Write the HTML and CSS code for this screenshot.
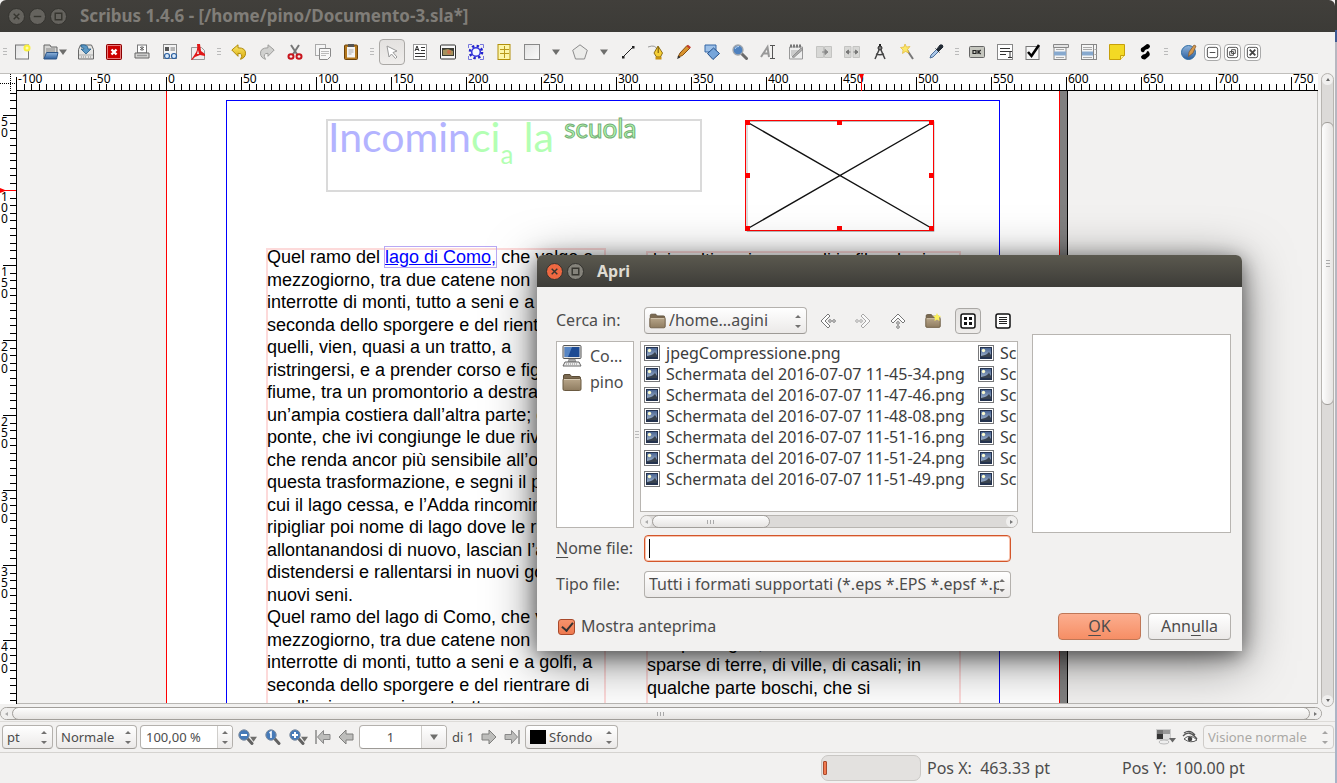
FILE: index.html
```html
<!DOCTYPE html>
<html lang="it">
<head>
<meta charset="utf-8">
<title>Scribus 1.4.6 - [/home/pino/Documento-3.sla*]</title>
<link rel="stylesheet" href="styles.css">
</head>
<body>
<svg class="defs" aria-hidden="true">
  <defs>
    <linearGradient id="g-blue" x1="0" y1="0" x2="0" y2="1"><stop offset="0" stop-color="#8fb4dc"/><stop offset="1" stop-color="#2c5f9e"/></linearGradient>
    <linearGradient id="g-photo" x1="0" y1="0" x2="0" y2="1"><stop offset="0" stop-color="#4a6593"/><stop offset="1" stop-color="#a3b7cf"/></linearGradient>
    <linearGradient id="g-gold" x1="0" y1="0" x2="0" y2="1"><stop offset="0" stop-color="#fbe96a"/><stop offset="1" stop-color="#d9a90c"/></linearGradient>
    <linearGradient id="g-paper" x1="0" y1="0" x2="1" y2="1"><stop offset="0" stop-color="#e2e2e2"/><stop offset="1" stop-color="#fafafa"/></linearGradient>
    <linearGradient id="g-folder" x1="0" y1="0" x2="0" y2="1"><stop offset="0" stop-color="#b9a78b"/><stop offset="1" stop-color="#8f7c60"/></linearGradient>
    <symbol id="photo" viewBox="0 0 16 16"><rect x=".5" y=".5" width="15" height="15" fill="#fff" stroke="#77787a"/><rect x="2" y="2" width="12" height="12" fill="#23324e"/><rect x="3" y="3" width="10" height="9" fill="url(#g-photo)"/><circle cx="5.500" cy="5.500" r="1.700" fill="#fbfbd0"/><path d="M3 12v-1l4-1 2-1 2-2 2 3v2z" fill="#39434f"/></symbol>
    <symbol id="folder" viewBox="0 0 20 18"><path d="M1.500 16V2.500q0-1.500 1.500-1.500h5l1.500 2H17q1.500 0 1.500 1.500V16" fill="#7b6a51" stroke="#5b4c36"/><rect x="1" y="5" width="18" height="12" rx="1.500" fill="url(#g-folder)" stroke="#6b5a41"/><path d="M2 6h16" stroke="#d6c9b2"/></symbol>
    <symbol id="computer" viewBox="0 0 20 22"><rect x="1" y=".5" width="18" height="13" rx="1" fill="#e6e6e4" stroke="#555"/><rect x="2.500" y="2" width="15" height="10" fill="#1d4b94"/><path d="M3 2h7L6 12H3z" fill="#5685c4"/><path d="M7 14h6l1 3H6z" fill="#aaa" stroke="#777" stroke-width=".6"/><path d="M3 17h14l2 4H1z" fill="#eee" stroke="#666"/><path d="M4 19h12" stroke="#888" stroke-dasharray="1 1"/></symbol>
    <symbol id="down" viewBox="0 0 8 6"><path d="M0 .5h8L4 6z" fill="#6e6e6c"/></symbol>
    <symbol id="updown" viewBox="0 0 6 14"><path d="M0 4h6L3 1zM0 11h6l-3 3z" fill="#727170"/></symbol>
    <symbol id="new" viewBox="0 0 16 16"><rect x=".5" y="1" width="13" height="14" fill="url(#g-paper)" stroke="#777"/><circle cx="12" cy="4" r="3.500" fill="#f8ef3b"/><circle cx="12" cy="4" r="1.500" fill="#fffcb0"/></symbol>
    <symbol id="open" viewBox="0 0 16 16"><path d="M1 15V1h6l1 2h6v5" fill="#d6d6d4" stroke="#666"/><path d="M3 5h9M3 7h9" stroke="#888"/><path d="M3.500 8.500H15L13.500 15H1z" fill="url(#g-blue)" stroke="#2c5587"/></symbol>
    <symbol id="save" viewBox="0 0 16 16"><path d="M.5 15V5.500l2-4.500h11l2 4.500V15z" fill="#e4e4e2" stroke="#686868"/><path d="M1 11h14" stroke="#aaa"/><path d="M10 13h3M3 13h5" stroke="#888" stroke-dasharray="1 1"/><path d="M3 1q7-1 7 4h3l-5 5-5-5h3q0-2-3-2z" fill="#5a97c4" stroke="#235d89" stroke-width=".8"/></symbol>
    <symbol id="close" viewBox="0 0 16 16"><rect x=".5" y=".5" width="15" height="15" rx="1" fill="#c00" stroke="#8b0000"/><rect x="1.500" y="1.500" width="13" height="13" fill="none" stroke="#e87878"/><path d="M5.500 5.500l5 5M10.500 5.500l-5 5" stroke="#fff" stroke-width="2.400"/></symbol>
    <symbol id="print" viewBox="0 0 16 16"><rect x="3.500" y="1" width="9" height="8" fill="#fff" stroke="#777"/><path d="M8 2v5M6 3l4 3M10 3L6 6" stroke="#666"/><path d="M1 9h14v5H1z" fill="#d8d8d6" stroke="#666"/><path d="M3 11.500h10" stroke="#999" stroke-width="1.500"/></symbol>
    <symbol id="preview" viewBox="0 0 16 16"><rect x="1.500" y=".5" width="13" height="14" fill="#f3f3f3" stroke="#888"/><rect x="3" y="3" width="4" height="4" fill="#555"/><path d="M8.500 4H13M8.500 6H13" stroke="#777"/><circle cx="5" cy="12" r="2.500" fill="#dcebfa" stroke="#2a5f9f" stroke-width="1.200"/><circle cx="12" cy="12" r="2.500" fill="#dcebfa" stroke="#2a5f9f" stroke-width="1.200"/></symbol>
    <symbol id="pdf" viewBox="0 0 16 16"><path d="M1.500 3.500h10l3 3v9h-13z" fill="#eee" stroke="#999"/><path d="M7 0h3l1 7 4 3v2l-5-1-5 2-3 3H1l4-6q3-4 2-10zM8 6l-1 4h2z" fill="#e01818" fill-rule="evenodd"/></symbol>
    <symbol id="undo" viewBox="0 0 16 16"><path d="M.8 6L7 .8v3q8 0 7.500 6-.3 4-5 5.500 3.500-6-2.500-6v3z" fill="url(#g-gold)" stroke="#b08a08"/></symbol>
    <symbol id="redo" viewBox="0 0 16 16"><path d="M15.200 6L9 .8v3q-8 0-7.500 6 .3 4 5 5.500Q3 9.300 9 9.300v3z" fill="#d0d0ce" stroke="#9d9d9b"/></symbol>
    <symbol id="cut" viewBox="0 0 16 16"><path d="M4 1l6.500 10M12 1L5.500 11" stroke="#777" stroke-width="2"/><ellipse cx="4" cy="12.500" rx="2.500" ry="2.300" fill="none" stroke="#c8141c" stroke-width="2"/><ellipse cx="12" cy="12.500" rx="2.500" ry="2.300" fill="none" stroke="#c8141c" stroke-width="2"/></symbol>
    <symbol id="copy" viewBox="0 0 16 16"><rect x=".5" y=".5" width="10" height="11" fill="#f5f5f5" stroke="#aaa"/><path d="M4.500 4.500h11v8l-3 3h-8z" fill="#f8f8f8" stroke="#8a8a8a"/><path d="M6 7.500h8M6 9.500h8M6 11.500h5" stroke="#bbb"/></symbol>
    <symbol id="paste" viewBox="0 0 16 16"><rect x="1.500" y="1" width="13" height="14.500" rx="1" fill="#b4781e" stroke="#6c430a"/><rect x="4" y="3" width="8" height="10.500" fill="#f4f4f4"/><rect x="5" y="0" width="6" height="3" fill="#555"/><path d="M5.500 6h5M5.500 8h5M5.500 10h3" stroke="#aaa"/></symbol>
    <symbol id="pointer" viewBox="0 0 16 16"><path d="M3 2l10 5-4 1.500 4 4.500-1.500 1.500-4-4.500L5 13z" fill="#fff" stroke="#999"/></symbol>
    <symbol id="textframe" viewBox="0 0 16 16"><rect x="1.500" y=".5" width="13" height="15" fill="#fff" stroke="#999"/><path d="M3 7l2-5 2 5M3.500 5.500h3M9 3.500h4M9 6.500h4M3 9.500h10M3 12.500h10" stroke="#333" fill="none"/></symbol>
    <symbol id="imageframe" viewBox="0 0 16 16"><rect x=".5" y="1" width="15" height="14" rx="1" fill="#f8f8f8" stroke="#333"/><rect x="2" y="4" width="12" height="8" fill="#3c3c34"/><path d="M3 11V6l5-1 5 2v4z" fill="#a5915c"/><circle cx="9" cy="8" r="2" fill="#cd6f4c"/></symbol>
    <symbol id="gear" viewBox="0 0 16 16"><path d="M.5 4V.5H4M12 .5h3.500V4M15.500 12v3.500H12M4 15.500H.5V12" fill="none" stroke="#77d"/><circle cx="8" cy="8" r="6" fill="none" stroke="#22c" stroke-width="2.600" stroke-dasharray="2.350 2.350"/><circle cx="8" cy="8" r="4.300" fill="#f4f6ff" stroke="#33d" stroke-width="1.500"/></symbol>
    <symbol id="table" viewBox="0 0 16 16"><rect x="2" y=".5" width="12" height="15" fill="#fdf6a8" stroke="#b1900b"/><path d="M8.500 2v12M4 5.500h9M4 9.500h9" stroke="#b99a1c"/></symbol>
    <symbol id="shape" viewBox="0 0 16 16"><rect x=".5" y=".5" width="15" height="15" fill="url(#g-paper)" stroke="#888"/></symbol>
    <symbol id="polygon" viewBox="0 0 16 16"><path d="M8 .8l7.300 5.500L12.500 15h-9L.7 6.300z" fill="#ececea" stroke="#8b8b8b"/></symbol>
    <symbol id="line" viewBox="0 0 16 16"><path d="M3 13L13 3" stroke="#222"/><path d="M2 12h2.500v2.500H2zM12 2h2.500v2.500H12z" fill="#222"/></symbol>
    <symbol id="bezier" viewBox="0 0 16 16"><path d="M0 3q8-3 9 3" fill="none" stroke="#999"/><path d="M10 2l4.500 7-2 4h-4L6 9z" fill="#f6cf35" stroke="#80600a" stroke-width=".9"/><path d="M10.200 3v6" stroke="#6b4d06"/><rect x="7.500" y="13" width="6" height="2.500" fill="#c7920f"/></symbol>
    <symbol id="pencil" viewBox="0 0 16 16"><path d="M2 13l2-4 7-7.500 3 2.500-7.500 7.500z" fill="#d8922c" stroke="#855012"/><path d="M12 .8l3 2.500-1.500 1.500-3-2.500z" fill="#c33d2f"/><path d="M1 15l1.300-3.500 2.200 2z" fill="#333"/></symbol>
    <symbol id="rotate" viewBox="0 0 16 16"><path d="M1 1h11v7H1z" fill="#9cc0e8" stroke="#3567a5"/><path d="M9.500 4l6 5.500L9 15.500 3.500 9.500z" fill="#76a5da" stroke="#234f89"/></symbol>
    <symbol id="zoom" viewBox="0 0 16 16"><path d="M9.500 9.500l5 5" stroke="#6b6b6b" stroke-width="3" stroke-linecap="round"/><circle cx="6" cy="6" r="5" fill="#4f82bf" stroke="#a0a6ad" stroke-width="1.300"/><path d="M3 5q1-3 4-2.500" stroke="#bcd5ef" fill="none"/></symbol>
    <symbol id="edittext" viewBox="0 0 16 16"><path d="M1 13L7.500 3 9 13M3.500 9.500H8" fill="none" stroke="#999" stroke-width="2"/><path d="M10 1.500h5M10 14.500h5M12.500 1.500v13" stroke="#555"/></symbol>
    <symbol id="story" viewBox="0 0 16 16"><path d="M1.500 3h13v12h-13z" fill="#eee" stroke="#999"/><path d="M2 2h12" stroke="#777" stroke-width="3" stroke-dasharray="2 1"/><path d="M3 7h8M3 9h6M3 11h4" stroke="#aaa"/><path d="M4 13l9-9 2 1.500-9 8z" fill="#aaa" stroke="#777" stroke-width=".6"/></symbol>
    <symbol id="link" viewBox="0 0 16 16"><path d="M.5 2.500h7v11h-7zM8.500 2.500h7v11h-7z" fill="#d8d8d6" stroke="#c4c4c2"/><path d="M6 8h4M9 5.500l3 2.500-3 2.500z" stroke="#888" fill="#888"/></symbol>
    <symbol id="unlink" viewBox="0 0 16 16"><path d="M.5 2.500h6.500v11H.5zM9 2.500h6.500v11H9z" fill="#d8d8d6" stroke="#c4c4c2"/><path d="M4.500 6L2 8l2.500 2zM11.500 6L14 8l-2.500 2zM3 8h3.500M9.500 8H13" stroke="#777" fill="#777"/></symbol>
    <symbol id="measure" viewBox="0 0 16 16"><path d="M8 0v2" stroke="#222" stroke-width="2"/><circle cx="8" cy="4" r="2" fill="#777" stroke="#222"/><path d="M7 6L3 15M9 6l4 9M4 10q4 1.500 8 0" stroke="#444" stroke-width="1.500" fill="none"/></symbol>
    <symbol id="wand" viewBox="0 0 16 16"><path d="M7 6l6 9" stroke="#777" stroke-width="2"/><path d="M5 0l1.500 3L10 2.500 7.500 5.500 9 9 5.500 7.500 2.500 9.500 3 6 .5 3.500 4 3z" fill="#fbe76a" stroke="#dfae20" stroke-width=".6"/></symbol>
    <symbol id="dropper" viewBox="0 0 16 16"><path d="M2 14l1-3 6-6 2 2-6 6z" fill="#a9c6e8" stroke="#4c6f99"/><path d="M7.500 4.500l4 4M9 5l3-4q3-1 3 2l-4 4z" fill="#222b35" stroke="#222b35"/></symbol>
    <symbol id="ok" viewBox="0 0 16 16"><rect x=".5" y="2.500" width="15" height="11" rx="1" fill="#c5c6be" stroke="#666"/><path d="M4 6.500h3v3H4zM9 6v4M11.700 6L9.500 8l2.200 2" fill="none" stroke="#222" stroke-width="1.200"/></symbol>
    <symbol id="field" viewBox="0 0 16 16"><rect x=".5" y=".5" width="15" height="15" fill="#fff" stroke="#888"/><path d="M3 4.500h10M3 7.500h10M3 10.500h6M11 7.500h4M11 13.500h4M13 7.500v6" stroke="#333"/></symbol>
    <symbol id="check" viewBox="0 0 16 16"><rect x="1" y="2.500" width="13" height="13" fill="#f6f6f6" stroke="#777"/><path d="M3 8l3.500 4L14 1" fill="none" stroke="#000" stroke-width="2.600"/></symbol>
    <symbol id="combo" viewBox="0 0 16 16"><rect x="1" y="1.500" width="12" height="14" fill="#f5f5f5" stroke="#888"/><path d="M.5.500h15v3H.5z" fill="#e4e4e4" stroke="#888"/><path d="M3 5.500h8M3 13.500h8" stroke="#aaa"/><path d="M1 7.500h12v4H1z" fill="#87a9ce"/></symbol>
    <symbol id="listbox" viewBox="0 0 16 16"><rect x=".5" y=".5" width="15" height="15" fill="#f5f5f5" stroke="#888"/><path d="M12.500 1v14" stroke="#888"/><path d="M2 3.500h9M2 5.500h9M2 13.500h9M13.500 5.500h2M13.500 10.500h2" stroke="#aaa"/><path d="M1 7.500h11v4H1z" fill="#87a9ce"/></symbol>
    <symbol id="note" viewBox="0 0 16 16"><path d="M.5.500h15v11l-4 4H.5z" fill="#f3d924" stroke="#c7a00a"/><path d="M11.500 15.500v-4h4" fill="#fbf08c" stroke="#c7a00a"/></symbol>
    <symbol id="linkann" viewBox="0 0 16 16"><path d="M4 7q-1-3 2-4l4-3q3 0 3 3l-2 2q-3 0-4 3-2 1-3-1zM12 8q2 3-1 5l-3 2.500q-4 0-4-3l2-2q3 0 4-3 1-1 2 .5z" fill="#000"/></symbol>
    <symbol id="globe" viewBox="0 0 16 16"><circle cx="7.500" cy="8.500" r="7" fill="url(#g-blue)" stroke="#2d6ca4"/><path d="M7.500 12.500L8 8l5-7 2 1-3 7z" fill="#d49a4f" stroke="#80552a" stroke-width=".7"/></symbol>
    <symbol id="zoombtn" viewBox="0 0 16 16"><path d="M9.500 9.500l4.500 5" stroke="#626262" stroke-width="3" stroke-linecap="round"/><circle cx="6" cy="6" r="5.200" fill="#467ab8" stroke="#7e8da0"/></symbol>
    <symbol id="arrow-left" viewBox="0 0 16 16"><path d="M1 8l7-7v4h7v6H8v4z" fill="#bdbdbb" stroke="#7f7f7d"/></symbol>
    <symbol id="arrow-first" viewBox="0 0 16 16"><path d="M1 1v14" stroke="#888" stroke-width="1.500"/><path d="M2.500 8l6-6.500v4H15v5H8.500v4z" fill="#bdbdbb" stroke="#888"/></symbol>
    <symbol id="chevron" viewBox="0 0 16 16"><path d="M1 8l7-7 2 2-5 5 5 5-2 2z" fill="#fff" stroke="#777"/><circle cx="10" cy="8" r="1.300" fill="#fff" stroke="#777"/><circle cx="14" cy="8" r="1.300" fill="#fff" stroke="#777"/></symbol>
  </defs>
</svg>

<div class="desktop">
<main class="window">
  <header class="titlebar">
    <button class="wm" aria-label="Chiudi"><svg viewBox="0 0 16 16"><path d="M5 5l6 6M11 5l-6 6"/></svg></button>
    <button class="wm" aria-label="Minimizza"><svg viewBox="0 0 16 16"><path d="M4 8h8"/></svg></button>
    <button class="wm" aria-label="Massimizza"><svg viewBox="0 0 16 16"><path d="M4.500 4.500h7v7h-7z"/></svg></button>
    <h1>Scribus 1.4.6 - [/home/pino/Documento-3.sla*]</h1>
  </header>

  <nav class="toolbar" aria-label="Strumenti">
    <i class="grip"></i>
    <button class="tool" aria-label="Nuovo"><svg><use href="#new"/></svg></button>
    <button class="tool wide" aria-label="Apri"><svg><use href="#open"/></svg><svg class="caret"><use href="#down"/></svg></button>
    <button class="tool" aria-label="Salva"><svg><use href="#save"/></svg></button>
    <button class="tool" aria-label="Chiudi documento"><svg><use href="#close"/></svg></button>
    <button class="tool" aria-label="Stampa"><svg><use href="#print"/></svg></button>
    <button class="tool" aria-label="Verifica"><svg><use href="#preview"/></svg></button>
    <button class="tool" aria-label="Esporta PDF"><svg><use href="#pdf"/></svg></button>
    <i class="grip"></i>
    <button class="tool" aria-label="Annulla"><svg><use href="#undo"/></svg></button>
    <button class="tool" aria-label="Ripeti"><svg><use href="#redo"/></svg></button>
    <button class="tool" aria-label="Taglia"><svg><use href="#cut"/></svg></button>
    <button class="tool" aria-label="Copia"><svg><use href="#copy"/></svg></button>
    <button class="tool" aria-label="Incolla"><svg><use href="#paste"/></svg></button>
    <i class="grip"></i>
    <button class="tool pressed" aria-label="Seleziona"><svg><use href="#pointer"/></svg></button>
    <button class="tool" aria-label="Cornice testo"><svg><use href="#textframe"/></svg></button>
    <button class="tool" aria-label="Cornice immagine"><svg><use href="#imageframe"/></svg></button>
    <button class="tool" aria-label="Cornice di resa"><svg><use href="#gear"/></svg></button>
    <button class="tool" aria-label="Tabella"><svg><use href="#table"/></svg></button>
    <button class="tool" aria-label="Forma"><svg><use href="#shape"/></svg></button>
    <button class="drop" aria-label="Altre forme"><svg class="caret"><use href="#down"/></svg></button>
    <button class="tool" aria-label="Poligono"><svg><use href="#polygon"/></svg></button>
    <button class="drop" aria-label="Opzioni poligono"><svg class="caret"><use href="#down"/></svg></button>
    <button class="tool" aria-label="Linea"><svg><use href="#line"/></svg></button>
    <button class="tool" aria-label="Bézier"><svg><use href="#bezier"/></svg></button>
    <button class="tool" aria-label="Mano libera"><svg><use href="#pencil"/></svg></button>
    <button class="tool" aria-label="Ruota"><svg><use href="#rotate"/></svg></button>
    <button class="tool" aria-label="Ingrandimento"><svg><use href="#zoom"/></svg></button>
    <button class="tool" aria-label="Modifica testo"><svg><use href="#edittext"/></svg></button>
    <button class="tool" aria-label="Story Editor"><svg><use href="#story"/></svg></button>
    <button class="tool" aria-label="Collega cornici"><svg><use href="#link"/></svg></button>
    <button class="tool" aria-label="Scollega cornici"><svg><use href="#unlink"/></svg></button>
    <button class="tool" aria-label="Misure"><svg><use href="#measure"/></svg></button>
    <button class="tool" aria-label="Copia proprietà"><svg><use href="#wand"/></svg></button>
    <button class="tool" aria-label="Contagocce"><svg><use href="#dropper"/></svg></button>
    <i class="grip"></i>
    <button class="tool" aria-label="Pulsante PDF"><svg><use href="#ok"/></svg></button>
    <button class="tool" aria-label="Campo testo PDF"><svg><use href="#field"/></svg></button>
    <button class="tool" aria-label="Casella PDF"><svg><use href="#check"/></svg></button>
    <button class="tool" aria-label="Combo PDF"><svg><use href="#combo"/></svg></button>
    <button class="tool" aria-label="Elenco PDF"><svg><use href="#listbox"/></svg></button>
    <button class="tool" aria-label="Annotazione"><svg><use href="#note"/></svg></button>
    <button class="tool" aria-label="Collegamento"><svg><use href="#linkann"/></svg></button>
    <i class="grip last"></i>
    <button class="tool" aria-label="Scribus"><svg><use href="#globe"/></svg></button>
    <div class="mdi">
      <button aria-label="Riduci"><svg viewBox="0 0 16 16"><rect x="2.500" y="2.500" width="11" height="11" rx="2"/><path d="M5 8h6"/></svg></button>
      <button aria-label="Ripristina"><svg viewBox="0 0 16 16"><rect x="2.500" y="2.500" width="11" height="11" rx="2"/><path d="M7 5h4v4H7zM5 7h4v4H5z"/></svg></button>
      <button aria-label="Chiudi"><svg viewBox="0 0 16 16"><rect x="2.500" y="2.500" width="11" height="11" rx="2"/><path d="M5 5l6 6M11 5l-6 6" stroke-width="2"/></svg></button>
    </div>
  </nav>

  <section class="workspace">
    <div class="view">
      <div class="ruler-row">
        <div class="corner"></div>
        <div class="ruler-h">
          <span>-100</span><span>-50</span><span>0</span><span>50</span><span>100</span><span>150</span><span>200</span><span>250</span><span>300</span><span>350</span><span>400</span><span>450</span><span>500</span><span>550</span><span>600</span><span>650</span><span>700</span><span>750</span>
          <svg class="mark-h" viewBox="0 0 5 17"><path d="M0 0h5L3 5v12H2V5z"/></svg>
        </div>
      </div>
      <div class="canvas-row">
        <div class="ruler-v">
          <span>50</span><span>100</span><span>150</span><span>200</span><span>250</span><span>300</span><span>350</span><span>400</span>
          <svg class="mark-v" viewBox="0 0 17 5"><path d="M0 0l5 2h12v1H5L0 5z"/></svg>
        </div>
        <div class="canvas">
          <div class="page"></div>
          <div class="margins"></div>
          <div class="title-frame"><span class="violet">Incomin</span><span class="green">ci<sub>a</sub> la <sup>scuola</sup></span></div>
          <svg class="picture" viewBox="0 0 190 112">
            <path d="M2 1.500h187v110H2z" fill="none" stroke="#bbb"/>
            <path d="M2 2l186 107M188 2L2 109" stroke="#111" stroke-width="1.400"/>
            <path d="M.5.500h188v110H.5z" fill="none" stroke="#f00"/>
            <path d="M0 0h5v5H0zM92 0h5v5h-5zM184 0h5v5h-5zM0 53h5v5H0zM184 53h5v5h-5zM0 106h5v5H0zM92 106h5v5h-5zM184 106h5v5h-5z" fill="#f00"/>
          </svg>
          <div class="text-frame first"><p>Quel ramo del <a href="#lago">lago di Como,</a> che volge a<br>mezzogiorno, tra due catene non<br>interrotte di monti, tutto a seni e a golfi, a<br>seconda dello sporgere e del rientrare di<br>quelli, vien, quasi a un tratto, a<br>ristringersi, e a prender corso e figura di<br>fiume, tra un promontorio a destra, e<br>un’ampia costiera dall’altra parte; e il<br>ponte, che ivi congiunge le due rive, par<br>che renda ancor più sensibile all’occhio<br>questa trasformazione, e segni il punto in<br>cui il lago cessa, e l’Adda rincomincia, per<br>ripigliar poi nome di lago dove le rive,<br>allontanandosi di nuovo, lascian l’acqua<br>distendersi e rallentarsi in nuovi golfi e in<br>nuovi seni.<br>Quel ramo del lago di Como, che volge a<br>mezzogiorno, tra due catene non<br>interrotte di monti, tutto a seni e a golfi, a<br>seconda dello sporgere e del rientrare di<br>quelli, vien, quasi a un tratto, a</p></div>
          <div class="text-frame second"><p>dai molti suoi cocuzzoli in fila, che in<br>vero lo fanno somigliare a una sega:<br>talché non è chi, al primo vederlo,<br>purché sia di fronte, come per<br>di su le mura di Milano che<br>settentrione, non lo discerna tosto,<br>un tal contrassegno, in quella lunga<br>vasta giogaia, dagli altri monti di<br>nome più oscuro e di forma più<br>comune. Per un buon pezzo, la<br>sale con un pendìo lento e continuo;<br>poi si rompe in poggi e in valloncelli,<br>in erte e in ispianate, secondo<br>l’ossatura de’ due monti, e il lavoro<br>dell’acque. Il lembo estremo,<br>dalle foci de’ torrenti, è quasi tutto<br>ghiaia e ciottoloni; il resto,<br>campi e vigne,<br>sparse di terre, di ville, di casali; in<br>qualche parte boschi, che si<br>prolungano su per la montagna.</p></div>
        </div>
      </div>
    </div>
    <div class="vscroll"><i class="cap up"></i><i class="slack-top"></i><i class="thumb"></i><i class="slack"></i><i class="cap down"></i></div>
  </section>
  <div class="hscroll"><i class="cap left"></i><i class="thumb"></i><i class="cap right"></i></div>

  <div class="bottombar">
    <div class="combo unit"><select aria-label="Unità"><option>pt</option></select><svg class="ud"><use href="#updown"/></svg></div>
    <div class="combo quality"><select aria-label="Qualità"><option>Normale</option></select><svg class="ud"><use href="#updown"/></svg></div>
    <div class="combo entry spin"><input aria-label="Zoom" value="100,00 %"><span class="side"><svg class="ud"><use href="#updown"/></svg></span></div>
    <button class="mini lens" aria-label="Riduci zoom"><svg><use href="#zoombtn"/><path d="M3 6h6" stroke="#fff" stroke-width="2"/></svg><svg class="caret"><use href="#down"/></svg></button>
    <button class="mini lens one" aria-label="Zoom 1:1"><svg><use href="#zoombtn"/><path d="M4.500 4L6 3v6" fill="none" stroke="#fff" stroke-width="1.600"/></svg></button>
    <button class="mini lens" aria-label="Aumenta zoom"><svg><use href="#zoombtn"/><path d="M3 6h6M6 3v6" stroke="#fff" stroke-width="2"/></svg><svg class="caret"><use href="#down"/></svg></button>
    <button class="mini" aria-label="Prima pagina"><svg><use href="#arrow-first"/></svg></button>
    <button class="mini" aria-label="Pagina precedente"><svg><use href="#arrow-left"/></svg></button>
    <div class="combo entry pageno"><input aria-label="Pagina" value="1"><span class="side"><svg class="caret"><use href="#down"/></svg></span></div>
    <span class="of">di 1</span>
    <button class="mini flip" aria-label="Pagina successiva"><svg><use href="#arrow-left"/></svg></button>
    <button class="mini flip" aria-label="Ultima pagina"><svg><use href="#arrow-first"/></svg></button>
    <div class="combo layer"><i class="swatch"></i><select aria-label="Livello"><option>Sfondo</option></select><svg class="ud"><use href="#updown"/></svg></div>
    <span class="spacer"></span>
    <button class="mini monitor" aria-label="Gestione colore"><svg viewBox="0 0 20 16"><path d="M0 0h15v11H0z" fill="#ccc"/><path d="M1 1h6v4H1z" fill="#777"/><path d="M7 1h7v4H7z" fill="#999"/><path d="M1 5h6v5H1z" fill="#333"/><path d="M7 5h7v5H7z" fill="#ddd"/><ellipse cx="8" cy="13" rx="5" ry="2" fill="#eee" stroke="#bbb"/><path d="M13 9h7l-3.500 4.500z" fill="#666"/></svg></button>
    <button class="mini" aria-label="Anteprima"><svg viewBox="0 0 16 16"><path d="M2 10q6-6 13 1-6 4-13-1z" fill="#fff" stroke="#555"/><circle cx="8" cy="10" r="2.300" fill="#444"/><path d="M1 7q6-7 14 3M2 4q6-4 11 2" fill="none" stroke="#555" stroke-width="1.300"/></svg></button>
    <div class="combo vision off"><select aria-label="Visione" disabled><option>Visione normale</option></select><svg class="ud"><use href="#updown"/></svg></div>
  </div>

  <footer class="status">
    <div class="progress" role="progressbar" aria-label="Avanzamento"><i></i></div>
    <span class="posx">Pos X:&nbsp; 463.33 pt</span>
    <span class="posy">Pos Y:&nbsp; 100.00 pt</span>
  </footer>
</main>
</div>

<form class="dialog" role="dialog" aria-label="Apri">
  <header class="titlebar active">
    <button type="button" class="wm red" aria-label="Chiudi"><svg viewBox="0 0 16 16"><path d="M5 5l6 6M11 5l-6 6"/></svg></button>
    <button type="button" class="wm" aria-label="Massimizza"><svg viewBox="0 0 16 16"><path d="M4.500 4.500h7v7h-7z"/></svg></button>
    <h2>Apri</h2>
  </header>
  <div class="body">
    <div class="chooser">
      <div class="line">
        <label for="where">Cerca in:</label>
        <div class="combo place"><svg class="f"><use href="#folder"/></svg><select id="where"><option>/home…agini</option></select><svg class="ud"><use href="#updown"/></svg></div>
        <div class="nav">
          <button type="button" class="tool" aria-label="Indietro"><svg><use href="#chevron"/></svg></button>
          <button type="button" class="tool flip dim" aria-label="Avanti"><svg><use href="#chevron"/></svg></button>
          <button type="button" class="tool up" aria-label="Su"><svg><use href="#chevron"/></svg></button>
          <button type="button" class="tool" aria-label="Nuova cartella"><svg viewBox="0 0 16 16"><use href="#folder" width="16" height="16"/><path d="M12 0l1.200 2.500 2.800.5-2 2 .5 3-2.500-1.500L9.500 8l.5-3-2-2 2.800-.5z" fill="#faf05a"/></svg></button>
          <button type="button" class="tool pressed" aria-label="Elenco"><svg viewBox="0 0 16 16"><rect x="1" y="1" width="14" height="14" rx="2" fill="#fff" stroke="#111" stroke-width="1.500"/><path d="M4 4h3v3H4zM9 4h3v3H9zM4 9h3v3H4zM9 9h3v3H9z" fill="#111"/></svg></button>
          <button type="button" class="tool" aria-label="Dettagli"><svg viewBox="0 0 16 16"><rect x="1" y="1" width="14" height="14" rx="2" fill="#fff" stroke="#111" stroke-width="1.500"/><path d="M4 4.500h8M4 6.500h8M4 8.500h8M4 10.500h8" stroke="#222"/></svg></button>
        </div>
      </div>
      <div class="panes">
        <ul class="places">
          <li><svg class="pc"><use href="#computer"/></svg>Co…</li>
          <li><svg><use href="#folder"/></svg>pino</li>
        </ul>
        <i class="grip"></i>
        <div class="files-col">
          <div class="files">
            <ul>
              <li><svg><use href="#photo"/></svg>jpegCompressione.png</li>
              <li><svg><use href="#photo"/></svg>Schermata del 2016-07-07 11-45-34.png</li>
              <li><svg><use href="#photo"/></svg>Schermata del 2016-07-07 11-47-46.png</li>
              <li><svg><use href="#photo"/></svg>Schermata del 2016-07-07 11-48-08.png</li>
              <li><svg><use href="#photo"/></svg>Schermata del 2016-07-07 11-51-16.png</li>
              <li><svg><use href="#photo"/></svg>Schermata del 2016-07-07 11-51-24.png</li>
              <li><svg><use href="#photo"/></svg>Schermata del 2016-07-07 11-51-49.png</li>
            </ul>
            <ul>
              <li><svg><use href="#photo"/></svg>Sc</li>
              <li><svg><use href="#photo"/></svg>Sc</li>
              <li><svg><use href="#photo"/></svg>Sc</li>
              <li><svg><use href="#photo"/></svg>Sc</li>
              <li><svg><use href="#photo"/></svg>Sc</li>
              <li><svg><use href="#photo"/></svg>Sc</li>
              <li><svg><use href="#photo"/></svg>Sc</li>
            </ul>
          </div>
          <div class="hscroll small"><i class="cap left"></i><i class="thumb"></i><i class="slack"></i><i class="cap right"></i></div>
        </div>
      </div>
      <div class="line entry-line">
        <label for="name"><u>N</u>ome file:</label>
        <div class="filename"><i class="cursor"></i><input id="name" type="text"></div>
      </div>
      <div class="line">
        <label for="type">Tipo file:</label>
        <div class="combo type"><select id="type"><option>Tutti i formati supportati (*.eps *.EPS *.epsf *.ps)</option></select><svg class="ud"><use href="#updown"/></svg></div>
      </div>
    </div>
    <div class="preview" aria-label="Anteprima"></div>
  </div>
  <div class="actions">
    <label class="tick"><input type="checkbox" checked> Mostra anteprima</label>
    <button type="submit" class="btn primary"><span><u>O</u>K</span></button>
    <button type="button" class="btn"><span>Ann<u>u</u>lla</span></button>
  </div>
</form>
</body>
</html>
```
FILE: styles.css
```css
* { box-sizing: border-box; }
html, body { height: 100%; }
body {
  margin: 0;
  overflow: hidden;
  position: relative;
  font-family: "Noto Sans", "Open Sans", sans-serif;
  font-size: 16px;
  line-height: 21px;
  color: #4c4c4c;
}
button, input, select { font: inherit; color: inherit; margin: 0; }
button { border: 0; padding: 0; background: none; }
ul { list-style: none; margin: 0; padding: 0; }
h1, h2, p { margin: 0; }
.defs { position: absolute; width: 0; height: 0; }

.desktop { height: 100%; padding-right: 2px; background: linear-gradient(#3c3b37 0 30px, #3e5a92 30px 42px, #b7b7c0 42px 500px, #a9b4c8); }
.window { height: 100%; display: flex; flex-direction: column; background: #f2f1f0; }

/* Title bars */
.titlebar { display: flex; align-items: center; gap: 4px; flex: none; height: 32px; padding-left: 8px; background: linear-gradient(#413f3b, #3c3b37); color: #807d78; border-radius: 6px 6px 0 0; }
.titlebar h1, .titlebar h2 { margin-left: 9px; font-size: 17px; font-weight: 700; line-height: 20px; }
.titlebar h2 { font-size: 16px; }
.wm { width: 17px; height: 17px; border-radius: 50%; background: #65635e; border: 1px solid #34332f; }
.wm svg { display: block; width: 15px; height: 15px; fill: none; stroke: #36352f; stroke-width: 1.500; }
.titlebar.active { padding-left: 9px; background: linear-gradient(#5b594f, #3d3c38); color: #dfdbd2; }
.active .wm { background: #85837b; }
.active .wm.red { background: #ee6841; }

/* Main toolbar */
.toolbar { display: flex; align-items: center; gap: 2px; flex: none; height: 41px; padding-bottom: 1px; }
.grip { flex: none; width: 11px; height: 8px; background: repeating-linear-gradient(#bbb 0 1px, transparent 1px 3px) content-box; padding: 0 3px 0 4px; }
.toolbar .grip:first-child { width: 8px; padding: 0 1px 0 3px; }
.grip.last { margin-right: 3px; }
.tool { display: flex; flex: none; align-items: center; justify-content: center; width: 26px; height: 26px; border-radius: 4px; }
.tool svg { width: 16px; height: 16px; }
.tool.wide { width: 33px; }
.tool .caret, .caret { width: 8px; height: 6px; }
.tool.pressed { border: 1px solid #aaa8a5; background: linear-gradient(#e3e1df, #efedeb); }
.drop { display: flex; justify-content: center; flex: none; width: 18px; }
.mdi { display: flex; gap: 3px; }
.mdi button { display: flex; width: 17px; height: 17px; border: 1px solid #aaa; border-radius: 4px; background: #fff; }
.mdi svg { width: 15px; height: 15px; fill: none; stroke: #444; }

/* Rulers and canvas */
.workspace { flex: 1; min-height: 0; display: flex; gap: 3px; padding-right: 1px; }
.view { flex: 1; min-width: 0; display: flex; flex-direction: column; }
.ruler-row { display: flex; height: 18px; border-top: 1px solid #c0bfbc; background: #fff; }
.corner { width: 16px; background: repeating-linear-gradient(90deg, #000 0 1px, transparent 1px 2px) 0 9px / 16px 1px no-repeat, repeating-linear-gradient(#000 0 1px, transparent 1px 2px) 10px 0 / 1px 17px no-repeat; }
.ruler-h {
  position: relative; flex: 1; min-width: 0; display: flex; overflow-x: clip; overflow-y: visible;
  border-bottom: 1px solid #000;
  font-size: 12px; line-height: 12px; color: #000;
  background:
    repeating-linear-gradient(90deg, #000 0 1px, transparent 1px 75px) 0 3px / 100% 13px no-repeat,
    repeating-linear-gradient(90deg, #000 0 1px, transparent 1px 8px, #000 8px 9px, transparent 9px 15px) 0 10px / 100% 6px no-repeat;
}
.ruler-h span { flex: 0 0 75px; padding-left: 2px; margin-top: -1px; }
.mark-h { position: absolute; left: 843px; top: 0; width: 5px; height: 17px; fill: #f00; }
.canvas-row { flex: 1; min-height: 0; display: flex; }
.ruler-v {
  position: relative; flex: none; width: 17px; padding-top: 24px; margin-bottom: 3px; overflow: hidden;
  border-right: 1px solid #000;
  font-size: 12px; line-height: 11px; color: #000;
  background:
    linear-gradient(#000 1px, transparent 1px) 3px 24px / 13px 75px repeat-y,
    linear-gradient(#000 1px, transparent 1px 8px, #000 8px 9px, transparent 9px) 10px 9px / 6px 15px repeat-y,
    #fff;
}
.ruler-v span { display: block; width: 8px; height: 75px; padding: 1px 0 0 1px; word-break: break-all; }
.mark-v { position: absolute; left: 0; top: 97px; width: 17px; height: 5px; fill: #f00; }
.canvas { position: relative; flex: 1; min-width: 0; overflow: hidden; border-right: 1px solid #c0bfbc; border-bottom: 1px solid #b9b7b4; margin-bottom: 3px; background: #f2f1f0; }
.page { position: absolute; left: 149px; top: -20px; bottom: -20px; width: 894px; background: #fff; border: 1px solid #f00; box-shadow: 7px 0 0 #808080, 8px 0 0 #000; }
.margins { position: absolute; left: 209px; top: 9px; bottom: -20px; width: 774px; border: 1px solid #00f; }
.title-frame { position: absolute; left: 309px; top: 28px; width: 376px; height: 73px; border: 2px solid #dadada; font-family: Lato, sans-serif; font-size: 41px; line-height: 32px; white-space: nowrap; }
.title-frame sub, .title-frame sup { font-size: 26px; line-height: 0; }
.title-frame sub { vertical-align: -12px; }
.title-frame sup { vertical-align: 14px; -webkit-text-stroke: 1px #77ad77; }
.violet { color: #b3b3ff; }
.green { color: #b3ffb3; }
.picture { position: absolute; left: 728px; top: 29px; width: 190px; height: 112px; }
.text-frame { position: absolute; bottom: -20px; border: 2px solid #fddada; font-family: "Liberation Sans", Arial, sans-serif; font-size: 18px; line-height: 1.25; color: #000; white-space: nowrap; }
.text-frame p { margin: -4px 0 0 -1px; }
.text-frame.first { left: 249px; top: 157px; width: 340px; }
.text-frame.second { left: 629px; top: 160px; width: 315px; }
.text-frame a { color: #00f; outline: 1px solid #b9a8f4; }

/* Scroll bars */
.vscroll { display: flex; flex-direction: column; width: 13px; border: 1px solid #b8b5b1; border-radius: 7px; background: #dcdad8; overflow: hidden; }
.cap { flex: none; display: flex; align-items: center; justify-content: center; background: #f0efee; width: 11px; height: 11px; border-radius: 6px; }
.cap::before { content: ""; border: 2px solid transparent; }
.cap.up::before { border-bottom: 3px solid #666; border-top: 0; }
.cap.down::before { border-top: 3px solid #666; border-bottom: 0; }
.cap.left::before { border-right: 3px solid #aaa; border-left: 0; }
.cap.right::before { border-left: 3px solid #777; border-right: 0; }
.slack-top { flex: 37 1 0; }
.vscroll .thumb { flex: 282 1 0; border: 1px solid #a19e9a; border-radius: 6px; margin: 0 -1px; background: repeating-linear-gradient(#aaa 0 1px, transparent 1px 3px) center / 4px 8px no-repeat, linear-gradient(90deg, #fdfdfd, #e6e4e2); }
.vscroll .slack { flex: 290 1 0; }
.hscroll { display: flex; flex: none; height: 13px; margin-right: 13px; border: 1px solid #a19e9a; border-radius: 7px; background: #eeedeb; }
.hscroll .thumb { flex: 1; margin: -1px 0; border: 1px solid #a19e9a; border-radius: 7px; background: repeating-linear-gradient(90deg, #aaa 0 1px, transparent 1px 3px) center / 8px 4px no-repeat, linear-gradient(#fdfdfd, #e6e4e2); }
.hscroll.small { margin: 3px 0 0; background: #dcdad8; border-color: #b8b5b1; }
.hscroll.small .thumb { flex: 0 0 118px; }
.hscroll .slack { flex: 1; }

/* Drop-downs and spin boxes */
.combo { display: flex; align-items: center; flex: none; height: 24px; padding: 0 5px 0 4px; border: 1px solid #b4b1ad; border-bottom-color: #9d9a96; border-radius: 4px; background: linear-gradient(#fff, #ebe9e8); }
.combo select { flex: 1; min-width: 0; appearance: none; border: 0; padding: 0; background: none; text-overflow: clip; overflow: hidden; opacity: 1; }
.ud { flex: none; width: 6px; height: 14px; }
.entry { padding: 0; background: #fff; overflow: hidden; }
.entry input { flex: 1; min-width: 0; border: 0; padding: 0 0 0 5px; background: none; outline: 0; }
.side { display: flex; align-items: center; justify-content: center; height: 100%; background: linear-gradient(#fff, #ebe9e8); border-left: 1px solid #d0cecb; }

/* Bottom bar */
.bottombar { display: flex; align-items: center; flex: none; height: 32px; margin-top: 1px; padding: 0 1px 0 2px; border-bottom: 1px solid #d5d3d0; border-top: 1px solid #dddbd8; font-size: 13px; gap: 3px; }
.unit { width: 51px; }
.quality { width: 81px; }
.spin { width: 93px; }
.spin .side { width: 15px; }
.mini { display: flex; flex: none; justify-content: center; align-items: center; width: 20px; height: 20px; }
.mini svg { flex: none; width: 16px; height: 16px; }
.mini .caret { width: 7px; height: 6px; margin: 4px 0 0 -4px; }
.lens { width: 23px; }
.lens.one { width: 22px; }
.monitor { width: 22px; }
.monitor svg { width: 20px; }
.pageno { width: 88px; }
.pageno input { text-align: center; padding: 0; }
.pageno .side { width: 25px; }
.of { width: 24px; white-space: nowrap; margin: 0 0 0 2px; }
.flip svg { transform: scaleX(-1); }
.swatch { width: 16px; height: 14px; margin-right: 3px; background: #000; }
.layer { width: 93px; }
.spacer { flex: 1; }
.vision { width: 131px; }
.off { color: #aaa8a5; border-color: #cfccc9; background: #f4f3f2; }
.off .ud { opacity: .6; }

/* Status bar */
.status { display: flex; align-items: center; flex: none; height: 30px; justify-content: flex-end; }
.progress { width: 100px; height: 26px; padding: 5px 1px; border: 1px solid #c9c7c4; border-radius: 7px; background: #e3e1df; }
.progress i { display: block; width: 4px; height: 14px; border: 1px solid #a9492b; border-radius: 1px; background: #ef7a50; }
.posx { margin-left: 6px; width: 195px; white-space: nowrap; }
.posy { width: 213px; white-space: nowrap; }

/* File dialog */
.dialog { position: absolute; left: 537px; top: 255px; width: 705px; background: #f2f1f0; border-radius: 6px 6px 0 0; box-shadow: 0 10px 50px rgba(0, 0, 0, .5), 0 4px 20px rgba(0, 0, 0, .5); }
.body { display: flex; gap: 14px; padding: 20px 11px 0 19px; }
.chooser { flex: 1; min-width: 0; }
.line { display: flex; align-items: center; height: 27px; }
.line label { flex: none; width: 88px; white-space: nowrap; }
.line .combo, .filename { height: 27px; }
.place { width: 163px; }
.place .f { width: 17px; height: 16px; margin-right: 3px; }
.nav { display: flex; gap: 9px; margin-left: 8px; }
.nav .up svg { transform: rotate(90deg); }
.dim { opacity: .6; }
.panes { display: flex; height: 187px; margin-top: 7px; }
.panes .grip { width: 6px; padding: 0 1px; align-self: center; }
.places { width: 78px; flex: none; border: 1px solid #b8b5b1; background: #fff; padding: 1px 0 0 5px; }
.places li { display: flex; align-items: center; gap: 8px; height: 26px; white-space: nowrap; }
.places svg { width: 20px; height: 19px; }
.places .pc { height: 22px; }
.files-col { flex: 1; min-width: 0; display: flex; flex-direction: column; }
.files { flex: 1; min-height: 0; display: flex; gap: 6px; overflow: hidden; border: 1px solid #b8b5b1; background: #fff; padding: 1px 0 0 3px; color: #3c3c3c; }
.files ul { flex: none; }
.files ul:first-child { width: 328px; }
.files li { display: flex; align-items: center; gap: 6px; height: 21px; white-space: nowrap; }
.files svg { flex: none; width: 16px; height: 16px; margin-bottom: 2px; }
.entry-line { margin: 7px 0 9px; }
.filename { display: flex; align-items: center; width: 367px; border: 1px solid #d3562a; border-radius: 4px; background: #fff; box-shadow: inset 0 0 0 1px #f7c3ae; padding-left: 4px; }
.filename input { flex: 1; min-width: 0; border: 0; outline: 0; background: none; }
.cursor { width: 1px; height: 19px; background: #000; }
.type { width: 367px; }
.preview { flex: none; width: 199px; height: 199px; margin-top: 27px; border: 1px solid #b8b5b1; background: #fff; }
.actions { display: flex; align-items: center; gap: 7px; padding: 15px 11px 11px 21px; }
.tick { display: flex; align-items: center; gap: 6px; margin-right: auto; }
.tick input { appearance: none; width: 17px; height: 16px; border: 1px solid #a9492b; border-radius: 3px; background: linear-gradient(#f6936c, #ee7a50); }
.tick input::after { content: ""; display: block; width: 5px; height: 9px; margin: 0 0 0 5px; border: solid #333; border-width: 0 2px 2px 0; transform: rotate(40deg); }
.btn { width: 83px; height: 27px; border: 1px solid #b4b1ad; border-bottom-color: #9d9a96; border-radius: 4px; background: linear-gradient(#fff, #ebe9e8); }
.btn.primary { border-color: #bf7757; background: linear-gradient(#fcae8f, #f68e65); }
u { text-underline-offset: 3px; }
```
